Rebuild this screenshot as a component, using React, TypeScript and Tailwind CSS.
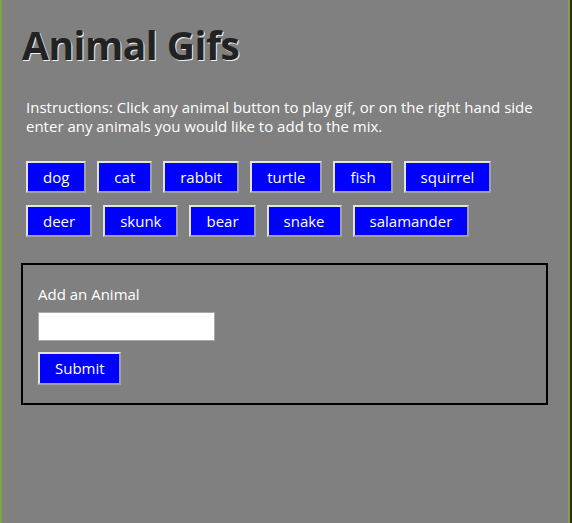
import React from "react";

const animals = [
  "dog",
  "cat",
  "rabbit",
  "turtle",
  "fish",
  "squirrel",
  "deer",
  "skunk",
  "bear",
  "snake",
  "salamander",
];

const btn =
  "bg-[#0000ff] text-white text-[15px] h-[32px] px-[15px] border-2 border-t-[#e3e3e3] border-l-[#e3e3e3] border-b-[#a0a0a0] border-r-[#a0a0a0] leading-none";

export default function App() {
  return (
    <div className="flex min-h-screen bg-[#2b2b2b] font-['Open_Sans',sans-serif]">
      <div className="w-[570px] min-h-screen bg-[#808080] border-l-2 border-r-2 border-[#7da346] pl-[20px] pr-[22px]">
        <h1 className="mt-[17px] text-[39px] tracking-[-0.5px] font-bold leading-[56px] text-[#222] [text-shadow:1px_1px_0_#f0f0f0]">
          Animal Gifs
        </h1>
        <p className="mt-[25px] pl-[4px] text-[15px] leading-[19px] text-white">
          Instructions: Click any animal button to play gif, or on the right
          hand side enter any animals you would like to add to the mix.
        </p>
        <div className="mt-[25px] pl-[4px] flex flex-wrap gap-x-[11px] gap-y-[12px] max-w-[522px]">
          {animals.map((a) => (
            <button key={a} className={btn}>
              {a}
            </button>
          ))}
        </div>
        <div className="mt-[26px] -ml-[1px] w-[527px] border-2 border-black px-[15px] pt-[19px] pb-[18px]">
          <label className="block text-[15px] leading-[20px] text-white">
            Add an Animal
          </label>
          <input
            type="text"
            className="mt-[8px] block w-[177px] h-[29px] bg-white border border-[#a9a9a9]"
          />
          <button className={btn + " mt-[11px] h-[33px] w-[83px]"}>Submit</button>
        </div>
      </div>
    </div>
  );
}
